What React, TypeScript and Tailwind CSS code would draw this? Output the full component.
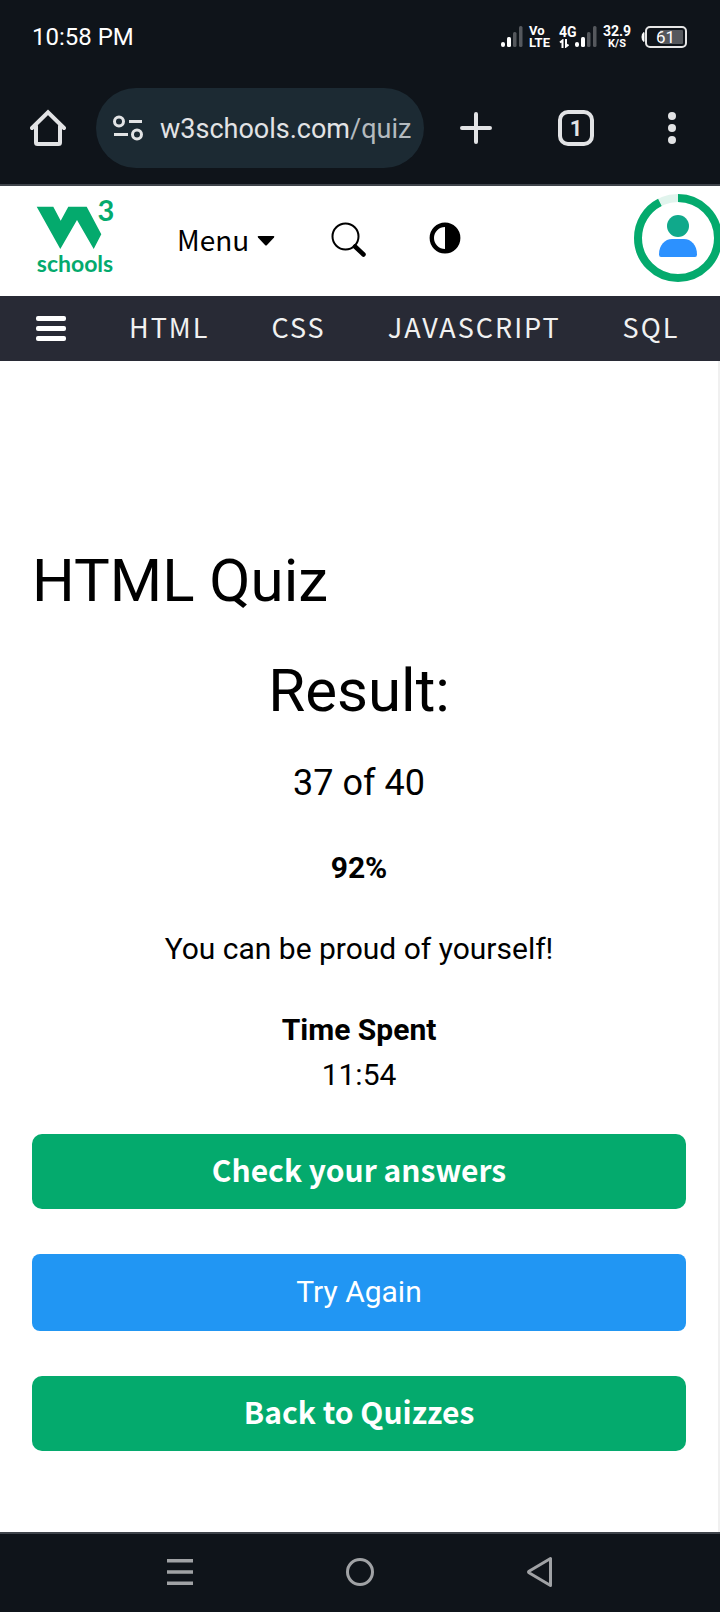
import type { ReactNode } from "react";

const SOURCE = "font-['Noto_Sans_CJK_SC',sans-serif]";

function Signal() {
  return (
    <svg width="22" height="22" viewBox="0 0 22 22" aria-hidden="true">
      <rect x="0" y="16" width="4" height="5" rx="2" fill="#fff" />
      <rect x="6" y="11" width="4" height="10" rx="1.5" fill="#fff" />
      <rect x="12" y="6" width="3.5" height="15" rx="1.5" fill="#55585d" />
      <rect x="18" y="0" width="3.5" height="21" rx="1.5" fill="#55585d" />
    </svg>
  );
}

function StatusBar() {
  return (
    <div className="flex h-[74px] items-center justify-between pr-[33px] pl-8 text-white">
      <span className="text-2xl">10:58 PM</span>
      <div className="flex items-center">
        <Signal />
        <div className="ml-[6px] flex w-5 flex-col text-[13px] leading-3 font-bold">
          <span>Vo</span>
          <span>LTE</span>
        </div>
        <div className="ml-[10px] flex items-end">
          <div className="flex w-4 flex-col gap-px text-[14px] leading-3 font-bold">
            <span>4G</span>
            <svg width="10" height="9" viewBox="0 0 10 9" fill="none" stroke="#fff" strokeWidth="2" aria-hidden="true">
              <path d="M3.5 9V1.5L1 3.5" />
              <path d="M7 0v7.5L9.500 5.500" />
            </svg>
          </div>
          <Signal />
        </div>
        <div className="ml-1 flex w-8 flex-col items-center font-bold">
          <span className="text-[14px] leading-[13px]">32.9</span>
          <span className="text-[11px] leading-[11px]">K/S</span>
        </div>
        <svg className="ml-2" width="46" height="22" viewBox="0 0 46 22" aria-label="Battery 61%">
          <path d="M3 6.500Q1 7 1 11t2 4.500z" fill="#fff" stroke="#fff" />
          <rect x="5" y="1" width="40" height="20" rx="4" fill="none" stroke="#e6e6e6" strokeWidth="2" />
          <rect x="19" y="4" width="23" height="14" rx="1" fill="#55585d" />
          <text x="24.500" y="17" textAnchor="middle" fontSize="17" fill="#fff">61</text>
        </svg>
      </div>
    </div>
  );
}

function BrowserButton({ label, className, children }: { label: string; className: string; children: ReactNode }) {
  return (
    <button type="button" aria-label={label} className={`flex h-20 shrink-0 items-center justify-center ${className}`}>
      {children}
    </button>
  );
}

function BrowserBar() {
  return (
    <div className="flex items-center border-b-2 border-[#3f444b] pt-[14px] pb-4 text-[#e2e3e5]">
      <BrowserButton label="Home" className="w-24">
        <svg width="36" height="38" viewBox="0 0 36 38" fill="none" stroke="currentColor" strokeWidth="4" strokeLinecap="round" strokeLinejoin="miter">
          <path d="M2 19 18 3.300 34 19" />
          <path d="M6 17v16.500q0 1.500 1.500 1.500h21q1.500 0 1.500-1.500V17" />
        </svg>
      </BrowserButton>
      <button type="button" className="flex h-20 min-w-0 flex-1 items-center overflow-hidden rounded-full bg-[#1c2a33] pl-4 text-[27px]">
        <svg className="shrink-0" width="32" height="26" viewBox="0 0 32 26" fill="none" stroke="currentColor" strokeWidth="3">
          <circle cx="7" cy="6.500" r="4.500" />
          <path d="M17 6.500h13M2 19.500h14" />
          <circle cx="25" cy="19.500" r="4.500" />
        </svg>
        <span className="ml-4 pt-0.5 whitespace-nowrap">
          w3schools.com<span className="text-[#b4babf]">/quiz</span>
        </span>
      </button>
      <BrowserButton label="New tab" className="w-[104px]">
        <svg width="32" height="32" viewBox="0 0 32 32" stroke="currentColor" strokeWidth="4" strokeLinecap="round">
          <path d="M16 2v28M2 16h28" />
        </svg>
      </BrowserButton>
      <BrowserButton label="Tabs" className="w-24">
        <span className="flex size-9 items-center justify-center rounded-[10px] border-4 border-current text-[22px] font-bold">1</span>
      </BrowserButton>
      <BrowserButton label="More" className="w-24">
        <svg width="8" height="32" viewBox="0 0 8 32" fill="currentColor">
          <circle cx="4" cy="4" r="4" />
          <circle cx="4" cy="16" r="4" />
          <circle cx="4" cy="28" r="4" />
        </svg>
      </BrowserButton>
    </div>
  );
}

function Logo() {
  return (
    <svg className="overflow-visible" width="80" height="78" viewBox="0 0 80 78" fill="#04aa6d" fontFamily="Lato, sans-serif" fontWeight="700">
      <path d="M.7 8.700h16.600l7.400 14 7.600-14h18.400l14.600 27.600L57.700 51 41 22 24.300 51z" />
      <text x="70" y="23" fontSize="29" textAnchor="middle">3</text>
      <text x="39" y="74" fontSize="23" textAnchor="middle">schools</text>
    </svg>
  );
}

function SiteHeader() {
  return (
    <header className="flex h-[110px] items-center overflow-hidden">
      <a href="#home" aria-label="W3Schools" className="ml-9 shrink-0 pb-2">
        <Logo />
      </a>
      <button type="button" className={`ml-[61px] flex items-center gap-2 pb-1 text-[28px] leading-9 ${SOURCE}`}>
        Menu
        <svg className="mt-1" width="18" height="10" viewBox="0 0 18 10">
          <path d="M1.500 0h15q1.500.3.500 1.500L10 9q-1 1-2 0L1 1.500Q0 .3 1.500 0z" />
        </svg>
      </button>
      <button type="button" aria-label="Search" className="ml-14 pb-0.5">
        <svg width="36" height="36" viewBox="0 0 36 36" fill="none" stroke="#000">
          <circle cx="14.500" cy="14.500" r="13" strokeWidth="2" />
          <path d="M24 24.500l8.500 8" strokeWidth="4.500" strokeLinecap="round" />
        </svg>
      </button>
      <button type="button" aria-label="Toggle dark mode" className="ml-[62px] pb-[6px]">
        <svg width="32" height="32" viewBox="0 0 32 32">
          <circle cx="16" cy="16" r="13.200" fill="none" stroke="#000" strokeWidth="4.400" />
          <path d="M16 3a13 13 0 0 1 0 26z" />
        </svg>
      </button>
      <a href="#profile" aria-label="Profile" className="-mr-0.5 ml-auto shrink-0 pb-[6px]">
        <svg width="88" height="88" viewBox="0 0 88 88">
          <circle cx="44" cy="44" r="40" fill="none" stroke="#e1f4ed" strokeWidth="8" />
          <circle cx="44" cy="44" r="40" fill="none" stroke="#04aa6d" strokeWidth="8" pathLength="100" strokeDasharray="92.500 7.500" transform="rotate(-90 44 44)" />
          <circle cx="44" cy="32" r="11" fill="#10a98b" />
          <path d="M25 60.500C25 51 31 45 38 45h12c7 0 13 6 13 15.500q0 2.500-2 2.500H27q-2 0-2-2.500z" fill="#2c91ff" />
        </svg>
      </a>
    </header>
  );
}

const topics = ["HTML", "CSS", "JAVASCRIPT", "SQL"];

function TopicNav() {
  return (
    <nav className={`flex h-[65px] items-center overflow-hidden bg-[#282a35] text-[27px] leading-8 tracking-[2px] text-[#f1f1f1] ${SOURCE}`}>
      <button type="button" aria-label="Topics" className="mr-8 ml-9 flex w-[30px] shrink-0 flex-col gap-[5px]">
        <span className="h-[5px] rounded-xs bg-white" />
        <span className="h-[5px] rounded-xs bg-white" />
        <span className="h-[5px] rounded-xs bg-white" />
      </button>
      {topics.map((topic) => (
        <a key={topic} href={`#${topic.toLowerCase()}`} className="px-[31px] pb-1">
          {topic}
        </a>
      ))}
    </nav>
  );
}

function Result() {
  return (
    <main className="flex flex-1 flex-col border-r-2 border-[#f0f0f0] px-8 pt-[175px] pb-20 text-center text-3xl leading-[45px]">
      <h1 className="text-left text-6xl leading-[90px]">HTML Quiz</h1>
      <h2 className="mt-5 text-6xl leading-[90px]">Result:</h2>
      <p className="mt-5 text-4xl leading-[54px]">37 of 40</p>
      <p className="mt-[35px] font-bold">92%</p>
      <p className="mt-9">You can be proud of yourself!</p>
      <p className="mt-9 font-bold">Time Spent</p>
      <p>11:54</p>
      <div className="mt-[37px] flex flex-col gap-[45px] text-white">
        <button type="button" className={`h-[75px] rounded-[10px] bg-[#04aa6d] pb-[6px] text-3xl font-bold ${SOURCE}`}>
          Check your answers
        </button>
        <button type="button" className="h-[77px] rounded-lg bg-[#2196f3] pb-0.5">
          Try Again
        </button>
        <button type="button" className={`h-[75px] rounded-[10px] bg-[#04aa6d] pb-[6px] text-3xl font-bold ${SOURCE}`}>
          Back to Quizzes
        </button>
      </div>
    </main>
  );
}

function SystemNav() {
  return (
    <div className="flex h-20 items-center justify-center gap-[148px] border-t-2 border-[#3f444b] bg-[#0f141a] pb-0.5">
      <button type="button" aria-label="Recent apps">
        <svg width="32" height="32" viewBox="0 0 32 32" stroke="#a0a2a5" strokeWidth="3.500">
          <path d="M3 4.800h26M3 16h26M3 27.200h26" />
        </svg>
      </button>
      <button type="button" aria-label="Home screen">
        <svg width="32" height="32" viewBox="0 0 32 32" fill="none" stroke="#a0a2a5" strokeWidth="3">
          <circle cx="16" cy="16" r="12.500" />
        </svg>
      </button>
      <button type="button" aria-label="Back">
        <svg width="32" height="32" viewBox="0 0 32 32" fill="none" stroke="#a0a2a5" strokeWidth="3" strokeLinejoin="round">
          <path d="M26.500 2.500v27L5 16.800q-1-.8 0-1.600z" />
        </svg>
      </button>
    </div>
  );
}

export default function App() {
  return (
    <div className="flex min-h-screen flex-col bg-white font-[Roboto,sans-serif] text-black">
      <div className="bg-[#0f141a]">
        <StatusBar />
        <BrowserBar />
      </div>
      <SiteHeader />
      <TopicNav />
      <Result />
      <SystemNav />
    </div>
  );
}
